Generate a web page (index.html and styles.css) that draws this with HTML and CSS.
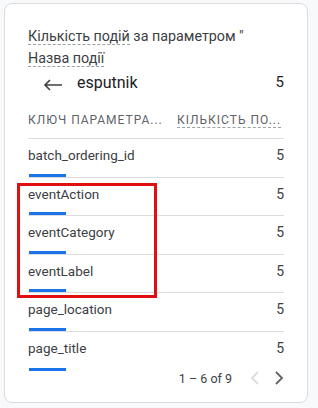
FILE: index.html
```html
<!DOCTYPE html>
<html lang="uk">
<head>
    <meta charset="UTF-8">
    <meta name="viewport" content="width=device-width, initial-scale=1.0">
    <title>Кількість подій за параметром</title>
    <link rel="stylesheet" href="styles.css">
</head>
<body>
    <div class="card">
        <h2 class="card-title">
            <span class="dotted">Кількість подій</span> за параметром "<br>
            <span class="dotted">Назва події</span>
        </h2>

        <div class="drill">
            <svg class="back" width="20" height="12" viewBox="0 0 20 12">
                <path d="M19 6H2M7 1L2 6l5 5" fill="none" stroke="#3c4043" stroke-width="1.6"/>
            </svg>
            <span class="drill-name">esputnik</span>
            <span class="drill-value">5</span>
        </div>

        <div class="table">
            <div class="thead">
                <span class="th-key">Ключ параметра...</span>
                <span class="th-count"><span class="dotted">Кількість по...</span></span>
            </div>
            <div class="row"><span class="key">batch_ordering_id</span><span class="val">5</span><i class="bar"></i></div>
            <div class="row"><span class="key">eventAction</span><span class="val">5</span><i class="bar"></i></div>
            <div class="row"><span class="key">eventCategory</span><span class="val">5</span><i class="bar"></i></div>
            <div class="row"><span class="key">eventLabel</span><span class="val">5</span><i class="bar"></i></div>
            <div class="row"><span class="key">page_location</span><span class="val">5</span><i class="bar"></i></div>
            <div class="row last"><span class="key">page_title</span><span class="val">5</span><i class="bar"></i></div>
        </div>

        <div class="pager">
            <span class="pager-text">1 – 6 of 9</span>
            <svg class="chev off" width="10" height="14" viewBox="0 0 10 14">
                <path d="M8 1L2 7l6 6" fill="none" stroke="currentColor" stroke-width="1.8"/>
            </svg>
            <svg class="chev" width="10" height="14" viewBox="0 0 10 14">
                <path d="M2 1l6 6-6 6" fill="none" stroke="currentColor" stroke-width="1.8"/>
            </svg>
        </div>

        <!-- highlight drawn over the screenshot -->
        <div class="highlight"></div>
    </div>
</body>
</html>
```

FILE: styles.css
```css
* {
    margin: 0;
    padding: 0;
    box-sizing: border-box;
}

body {
    font-family: Roboto, "Liberation Sans", sans-serif;
    background-color: #f8f9fa;
    color: #3c4043;
    padding: 3px 10px 0 4px;
}

.card {
    position: relative;
    background-color: #fff;
    border: 1px solid #dadce0;
    border-radius: 8px;
    height: 400px;
    padding: 21px 23px 0;
}

.card-title {
    font-size: 14.3px;
    font-weight: 400;
    line-height: 22px;
    color: #3c4043;
}

.dotted {
    border-bottom: 1px dashed #9aa0a6;
}

.drill {
    display: flex;
    align-items: center;
    height: 30px;
    margin-top: -2px;
}

.back {
    margin-left: 15px;
    margin-top: 6px;
}

.drill-name {
    font-size: 16px;
    margin-left: 14px;
    flex: 1;
    color: #202124;
}

.drill-value {
    font-size: 15px;
    color: #202124;
}

.thead {
    display: flex;
    align-items: center;
    height: 42px;
    padding-top: 4px;
    border-bottom: 1px solid #dadce0;
    font-size: 12px;
    letter-spacing: 1px;
    text-transform: uppercase;
    color: #5f6368;
}

.th-key {
    flex: 1;
}

.th-count {
    width: 107px;
}

.row {
    position: relative;
    display: flex;
    height: 38.6px;
    padding-top: 8px;
    border-bottom: 1px solid #dadce0;
    font-size: 13.5px;
    color: #3c4043;
}

.row.last {
    border-bottom: none;
}

.key {
    flex: 1;
}

.val {
    font-size: 14px;
}

.bar {
    position: absolute;
    left: 1px;
    bottom: 0;
    width: 37px;
    height: 3px;
    background-color: #1a73e8;
}

.pager {
    display: flex;
    align-items: center;
    justify-content: flex-end;
    gap: 14px;
    margin-top: 0;
    font-size: 12.5px;
    color: #3c4043;
}

.chev {
    color: #5f6368;
}

.chev.off {
    color: #dadce0;
    margin-left: 4px;
}

.highlight {
    position: absolute;
    left: 12px;
    top: 179px;
    width: 140px;
    height: 115px;
    border: 3px solid #e01010;
}
```
